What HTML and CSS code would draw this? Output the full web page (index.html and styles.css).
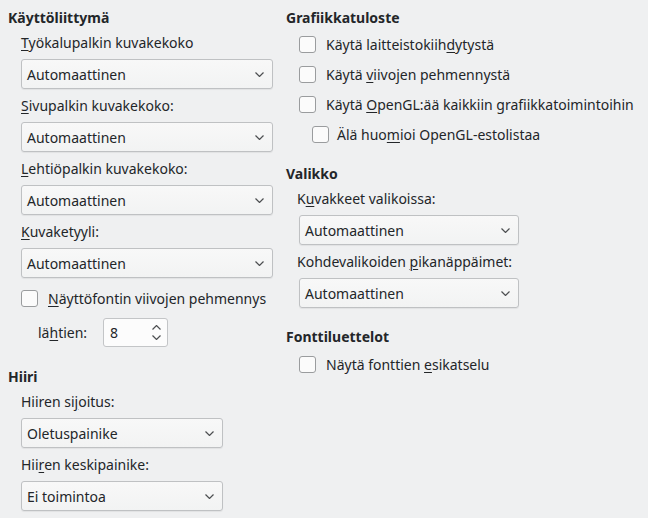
FILE: index.html
```html
<!DOCTYPE html>
<html lang="fi">
<head>
<meta charset="utf-8">
<link rel="stylesheet" href="styles.css">
</head>
<body>
<div class="page">
  <div class="col col-left">
    <div class="heading">Käyttöliittymä</div>
    <div class="label"><u>T</u>yökalupalkin kuvakekoko</div>
    <div class="combo wide"><span>Automaattinen</span><svg class="chev" viewBox="0 0 9 5"><path d="M0.5 0.5 L4.5 4.5 L8.5 0.5"/></svg></div>
    <div class="label"><u>S</u>ivupalkin kuvakekoko:</div>
    <div class="combo wide"><span>Automaattinen</span><svg class="chev" viewBox="0 0 9 5"><path d="M0.5 0.5 L4.5 4.5 L8.5 0.5"/></svg></div>
    <div class="label"><u>L</u>ehtiöpalkin kuvakekoko:</div>
    <div class="combo wide"><span>Automaattinen</span><svg class="chev" viewBox="0 0 9 5"><path d="M0.5 0.5 L4.5 4.5 L8.5 0.5"/></svg></div>
    <div class="label"><u>K</u>uvaketyyli:</div>
    <div class="combo wide"><span>Automaattinen</span><svg class="chev" viewBox="0 0 9 5"><path d="M0.5 0.5 L4.5 4.5 L8.5 0.5"/></svg></div>
    <div class="check first-left"><span class="box"></span><span><u>N</u>äyttöfontin viivojen pehmennys</span></div>
    <div class="spinrow">
      <span class="spinlabel">lä<u>h</u>tien:</span>
      <div class="spin"><span>8</span><svg class="arrows" viewBox="0 0 9 15"><path d="M0.5 4.5 L4.5 0.5 L8.5 4.5"/><path d="M0.5 10.5 L4.5 14.5 L8.5 10.5"/></svg></div>
    </div>
    <div class="heading h-mouse">Hiiri</div>
    <div class="label">Hiiren si<u>j</u>oitus:</div>
    <div class="combo narrow"><span>Oletuspainike</span><svg class="chev" viewBox="0 0 9 5"><path d="M0.5 0.5 L4.5 4.5 L8.5 0.5"/></svg></div>
    <div class="label">Hii<u>r</u>en keskipainike:</div>
    <div class="combo narrow"><span>Ei toimintoa</span><svg class="chev" viewBox="0 0 9 5"><path d="M0.5 0.5 L4.5 4.5 L8.5 0.5"/></svg></div>
  </div>
  <div class="col col-right">
    <div class="heading">Grafiikkatuloste</div>
    <div class="checks">
      <div class="check"><span class="box"></span><span>Käytä laitteistokiih<u>d</u>ytystä</span></div>
      <div class="check"><span class="box"></span><span>Käytä <u>v</u>iivojen pehmennystä</span></div>
      <div class="check"><span class="box"></span><span>Käytä <u>O</u>penGL:ää kaikkiin grafiikkatoimintoihin</span></div>
      <div class="check sub"><span class="box"></span><span>Älä huo<u>m</u>ioi OpenGL-estolistaa</span></div>
    </div>
    <div class="heading h-menu">Valikko</div>
    <div class="label r">K<u>u</u>vakkeet valikoissa:</div>
    <div class="combo mid"><span>Automaattinen</span><svg class="chev" viewBox="0 0 9 5"><path d="M0.5 0.5 L4.5 4.5 L8.5 0.5"/></svg></div>
    <div class="label r">Kohdevalikoiden <u>p</u>ikanäppäimet:</div>
    <div class="combo mid"><span>Automaattinen</span><svg class="chev" viewBox="0 0 9 5"><path d="M0.5 0.5 L4.5 4.5 L8.5 0.5"/></svg></div>
    <div class="heading h-font">Fonttiluettelot</div>
    <div class="check font-check"><span class="box"></span><span>Näytä fonttien <u>e</u>sikatselu</span></div>
  </div>
</div>
</body>
</html>
```

FILE: styles.css
```css
html, body {
  margin: 0;
  padding: 0;
  background: #eff0f1;
}
body {
  font-family: "Noto Sans", "DejaVu Sans", sans-serif;
  font-size: 14px;
  color: #232629;
  width: 648px;
  height: 518px;
  overflow: hidden;
}
u {
  text-decoration: underline;
  text-underline-offset: 2px;
  text-decoration-thickness: 1px;
}
.page {
  display: grid;
  grid-template-columns: 278px 1fr;
  padding: 9px 0 0 8px;
}
.col {
  display: flex;
  flex-direction: column;
  align-items: flex-start;
}
.heading {
  font-weight: bold;
  height: 18px;
  line-height: 18px;
}
.label {
  height: 18px;
  line-height: 18px;
  margin: 7px 0 7px 13px;
}
.combo {
  box-sizing: border-box;
  height: 30px;
  margin-left: 13px;
  margin-bottom: 1px;
  border: 1px solid #bfc1c3;
  border-radius: 3px;
  background: linear-gradient(#f8f8f8, #f2f3f3);
  box-shadow: 0 1px 1px rgba(0,0,0,0.06);
  display: flex;
  align-items: center;
  justify-content: space-between;
  padding: 0 8px 0 5px;
}
.combo.wide { width: 252px; }
.combo.narrow { width: 202px; }
.combo.mid { width: 220px; }
.chev {
  width: 9px;
  height: 5px;
  fill: none;
  stroke: #4d4f51;
  stroke-width: 1.2;
}
.check {
  display: flex;
  align-items: center;
  height: 18px;
  margin-left: 13px;
  gap: 10px;
}
.box {
  box-sizing: border-box;
  width: 17px;
  height: 17px;
  border: 1px solid #9a9c9e;
  border-radius: 3px;
  background: #fbfbfb;
}
.first-left {
  margin-top: 10px;
}
.spinrow {
  display: flex;
  align-items: center;
  margin-top: 11px;
  margin-left: 30px;
}
.spinlabel {
  width: 65px;
}
.spin {
  box-sizing: border-box;
  width: 65px;
  height: 29px;
  border: 1px solid #c3c5c7;
  border-radius: 3px;
  background: #fcfcfc;
  display: flex;
  align-items: center;
  justify-content: space-between;
  padding: 0 6px 0 6px;
}
.arrows {
  width: 9px;
  height: 15px;
  fill: none;
  stroke: #4d4f51;
  stroke-width: 1.2;
}
.h-mouse {
  margin-top: 21px;
}
.checks {
  display: flex;
  flex-direction: column;
  gap: 12px;
  margin-top: 8px;
}
.check.sub {
  margin-left: 26px;
  gap: 8px;
}
.h-menu {
  margin-top: 22px;
}
.label.r {
  margin-left: 11px;
}
.h-font {
  margin-top: 19px;
}
.font-check {
  margin-top: 9px;
}
```
